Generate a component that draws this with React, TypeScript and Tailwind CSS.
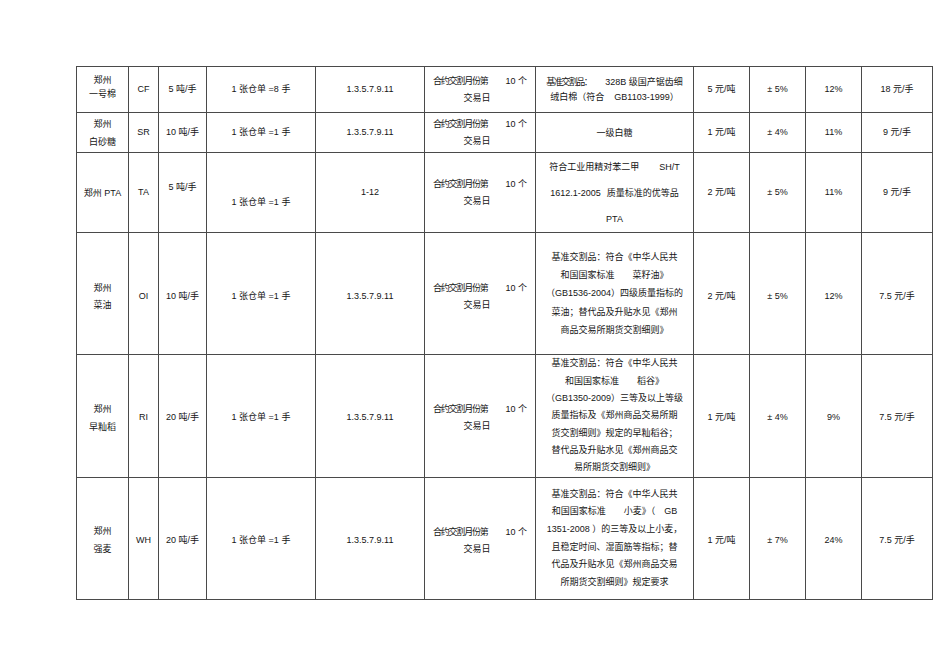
import React from "react";

type Row = {
  h: string;
  name: string[];
  nameLead: string;
  nameCls?: string;
  code: string;
  unit: string;
  unitCls?: string;
  receipt: string;
  receiptCls?: string;
  months: string;
  desc: React.ReactNode[];
  descLead: string;
  tick: string;
  limit: string;
  margin: string;
  fee: string;
  shift?: string;
};

const Contract = () => (
  <div className="flex flex-col items-center leading-[16.5px]">
    <div className="whitespace-nowrap">
      <span className="tracking-[-1.2px]">合约交割月份第</span>
      <span className="ml-[18px]">10 个</span>
    </div>
    <div className="pr-[6px]">交易日</div>
  </div>
);

const rows: Row[] = [
  {
    h: "h-[46px]",
    name: ["郑州", "一号棉"],
    nameLead: "leading-[14px]",
    nameCls: "pb-[6px]",
    code: "CF",
    unit: "5 吨/手",
    receipt: "1 张仓单 =8 手",
    months: "1.3.5.7.9.11",
    desc: [
      <span key="a">
        <span className="tracking-[-1.5px]">基准交割品：</span>
        <span className="ml-[14px]">328B 级国产锯齿细</span>
      </span>,
      <span key="b">
        绒白棉（符合<span className="ml-[10px]">GB1103-1999）</span>
      </span>,
    ],
    descLead: "leading-[14.3px]",
    tick: "5 元/吨",
    limit: "± 5%",
    margin: "12%",
    fee: "18 元/手",
  },
  {
    h: "h-[40px]",
    name: ["郑州", "白砂糖"],
    nameLead: "leading-[18px]",
    code: "SR",
    unit: "10 吨/手",
    receipt: "1 张仓单 =1 手",
    months: "1.3.5.7.9.11",
    desc: ["一级白糖"],
    descLead: "leading-[18px]",
    tick: "1 元/吨",
    limit: "± 4%",
    margin: "11%",
    fee: "9 元/手",
  },
  {
    h: "h-[80px]",
    name: ["郑州 PTA"],
    nameLead: "leading-[14px]",
    code: "TA",
    unit: "5 吨/手",
    unitCls: "pb-[10px]",
    receipt: "1 张仓单 =1 手",
    receiptCls: "pt-[20px]",
    months: "1-12",
    desc: [
      <span key="a">
        符合工业用精对苯二甲<span className="ml-[20px]">SH/T</span>
      </span>,
      <span key="b">
        1612.1-2005<span className="ml-[6px]">质量标准的优等品</span>
      </span>,
      "PTA",
    ],
    descLead: "leading-[26px]",
    tick: "2 元/吨",
    limit: "± 5%",
    margin: "11%",
    fee: "9 元/手",
  },
  {
    h: "h-[122px]",
    name: ["郑州", "菜油"],
    nameLead: "leading-[17px]",
    code: "OI",
    unit: "10 吨/手",
    receipt: "1 张仓单 =1 手",
    months: "1.3.5.7.9.11",
    desc: [
      "基准交割品：符合《中华人民共",
      "和国国家标准　　菜籽油》",
      "（GB1536-2004）四级质量指标的",
      "菜油；替代品及升贴水见《郑州",
      "商品交易所期货交割细则》",
    ],
    descLead: "leading-[18.3px]",
    tick: "2 元/吨",
    limit: "± 5%",
    margin: "12%",
    fee: "7.5 元/手",
    shift: "pt-[6px]",
  },
  {
    h: "h-[123px]",
    name: ["郑州", "早籼稻"],
    nameLead: "leading-[18px]",
    code: "RI",
    unit: "20 吨/手",
    receipt: "1 张仓单 =1 手",
    months: "1.3.5.7.9.11",
    desc: [
      "基准交割品：符合《中华人民共",
      "和国国家标准　　稻谷》",
      "（GB1350-2009）三等及以上等级",
      "质量指标及《郑州商品交易所期",
      "货交割细则》规定的早籼稻谷；",
      "替代品及升贴水见《郑州商品交",
      "易所期货交割细则》",
    ],
    descLead: "leading-[17.3px]",
    tick: "1 元/吨",
    limit: "± 4%",
    margin: "9%",
    fee: "7.5 元/手",
    shift: "pt-[3px]",
  },
  {
    h: "h-[122px]",
    name: ["郑州", "强麦"],
    nameLead: "leading-[17.5px]",
    code: "WH",
    unit: "20 吨/手",
    receipt: "1 张仓单 =1 手",
    months: "1.3.5.7.9.11",
    desc: [
      "基准交割品：符合《中华人民共",
      "和国国家标准　　小麦》（　GB",
      "1351-2008 ）的三等及以上小麦，",
      "且稳定时间、湿面筋等指标；替",
      "代品及升贴水见《郑州商品交易",
      "所期货交割细则》规定要求",
    ],
    descLead: "leading-[17.6px]",
    tick: "1 元/吨",
    limit: "± 7%",
    margin: "24%",
    fee: "7.5 元/手",
    shift: "pt-[4px]",
  },
];

const cell =
  "flex flex-col items-center justify-center text-center border-r border-b border-[#4a4a4a] overflow-hidden";

export default function App() {
  return (
    <div
      className="w-[950px] h-[672px] bg-white text-[#151515] text-[9px]"
      style={{ fontFamily: '"Liberation Sans", "Noto Sans CJK SC", sans-serif' }}
    >
      <div className="pt-[66px] pl-[76px]">
        <div className="w-[857px] border-l border-t border-[#4a4a4a] grid grid-cols-[52px_30px_48px_109px_109px_111px_158px_56px_56px_56px_71px]">
          {rows.map((r, i) => (
            <React.Fragment key={i}>
              <div className={`${cell} ${r.h} ${r.nameLead} ${r.shift ?? ""} ${r.nameCls ?? ""}`}>
                {r.name.map((n, j) => (
                  <div key={j} className="whitespace-nowrap">
                    {n}
                  </div>
                ))}
              </div>
              <div className={`${cell} ${r.h} ${r.shift ?? ""}`}>{r.code}</div>
              <div className={`${cell} ${r.h} ${r.shift ?? ""} ${r.unitCls ?? ""}`}>
                <span className="whitespace-nowrap">{r.unit}</span>
              </div>
              <div className={`${cell} ${r.h} ${r.shift ?? ""} ${r.receiptCls ?? ""}`}>
                <span className="whitespace-nowrap">{r.receipt}</span>
              </div>
              <div className={`${cell} ${r.h} ${r.shift ?? ""}`}>{r.months}</div>
              <div className={`${cell} ${r.h} ${r.shift ?? ""}`}>
                <Contract />
              </div>
              <div className={`${cell} ${r.h} ${r.descLead}`}>
                {r.desc.map((d, j) => (
                  <div key={j} className="whitespace-pre">
                    {d}
                  </div>
                ))}
              </div>
              <div className={`${cell} ${r.h} ${r.shift ?? ""}`}>
                <span className="whitespace-nowrap">{r.tick}</span>
              </div>
              <div className={`${cell} ${r.h} ${r.shift ?? ""}`}>
                <span className="whitespace-nowrap">{r.limit}</span>
              </div>
              <div className={`${cell} ${r.h} ${r.shift ?? ""}`}>{r.margin}</div>
              <div className={`${cell} ${r.h} ${r.shift ?? ""}`}>
                <span className="whitespace-nowrap">{r.fee}</span>
              </div>
            </React.Fragment>
          ))}
        </div>
      </div>
    </div>
  );
}
